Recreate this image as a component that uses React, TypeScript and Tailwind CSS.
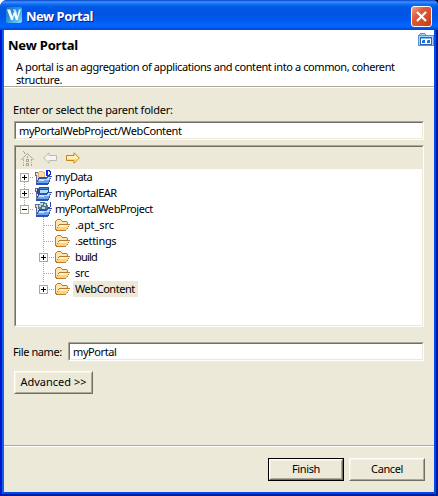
import type { ReactNode } from "react";

const sunken =
  "border border-t-[#aca899] border-l-[#aca899] border-r-white border-b-white";
const sunkenInner =
  "border border-t-[#716f64] border-l-[#716f64] border-r-[#ece9d8] border-b-[#ece9d8]";
const raised =
  "border border-t-white border-l-white border-r-[#716f64] border-b-[#716f64]";
const raisedInner =
  "border border-t-[#f4f1e6] border-l-[#f4f1e6] border-r-[#aca899] border-b-[#aca899]";

function AppLogo() {
  return (
    <svg width="16" height="16" viewBox="0 0 16 16">
      <defs>
        <linearGradient id="logo" x1="0" y1="0" x2="1" y2="1">
          <stop offset="0" stopColor="#1b6fc4" />
          <stop offset="0.5" stopColor="#2c9ae0" />
          <stop offset="1" stopColor="#8fdcf8" />
        </linearGradient>
      </defs>
      <rect width="16" height="16" rx="2" fill="url(#logo)" />
      <path d="M1 2.500h3.200l2.200 7L8 4.500h2l1.500 5L13 2.500h1.800L11.500 13H10L8 8l-1.200 5H5z" fill="#f4fbff" />
      <path d="M6.500 2.500h3.200L11 7z" fill="#bfe6fa" />
    </svg>
  );
}

function PortalIcon() {
  return (
    <svg width="16" height="14" viewBox="0 0 16 14" shapeRendering="crispEdges">
      <path d="M1 2h1V1h5v1h1v1h8v11H0V3h1z" fill="#5a90d8" />
      <path d="M2 2h5v1H2zM1 4h14v9H1z" fill="#a9d3f7" />
      <path d="M2 5h12v8H2z" fill="#2f62b5" />
      <path d="M3 7h10v5H3z" fill="#fff" />
      <path d="M3 6h10v1H3z" fill="#8abcf0" />
      <path d="M4 8h3v3H4zM9 8h3v3H9z" fill="#1c6fe0" />
      <path d="M4 8h1v1H4zM9 8h1v1H9z" fill="#70b4f4" />
    </svg>
  );
}

function HomeIcon() {
  return (
    <svg width="13" height="15" viewBox="0 0 13 15" shapeRendering="crispEdges" fill="#aca899">
      <path d="M2 0h1v1H2zM3 1h1v2H3zM6 2h1v1H6zM5 3h1v1H5zM7 3h1v1H7zM4 4h1v1H4zM8 4h1v1H8zM3 5h1v1H3zM9 5h1v1H9zM2 6h1v1H2zM10 6h1v1h-1zM1 7h1v1H1zM11 7h1v1h-1zM0 8h1v1H0zM12 8h1v1h-1z" />
      <path d="M6 5h1v2H6zM2 8h1v2H2zM2 11h1v1H2zM2 13h1v2H2zM10 8h1v2h-1zM10 11h1v1h-1zM10 13h1v2h-1zM5 8h3v3H5zM5 12h3v3H5z" />
      <path d="M6 9h1v1H6zM6 13h1v1H6z" fill="#ece9d8" />
    </svg>
  );
}

function BackIcon() {
  return (
    <svg width="14" height="12" viewBox="0 0 14 12">
      <path d="M.7 6 6 .8V3.500h7.500v5H6v2.700z" fill="#f5f4ee" stroke="#bdbab0" />
    </svg>
  );
}

function ForwardIcon() {
  return (
    <svg width="14" height="12" viewBox="0 0 14 12">
      <path d="M13.300 6 8 .8V3.500H.5v5H8v2.700z" fill="#fff0b0" stroke="#c88410" />
      <path d="M1 7h11L8.500 10V8H1z" fill="#fbd873" />
    </svg>
  );
}

function FolderIcon() {
  return (
    <svg width="16" height="12" viewBox="0 0 16 12" shapeRendering="crispEdges">
      <path d="M1 1h1V0h4v1h1v1h5v1h1v2h2v1h-1v2h-1v2h-1v1h-1v1H1v-1H0V2h1z" fill="#bd7a2a" />
      <path d="M2 1h4v1h1v1h5v2H4v1H3v2H2v2H1V2h1z" fill="#fce6ad" />
      <path d="M4 6h10v1h-1v2h-1v2H2V9h1V7h1z" fill="#fbd280" />
      <path d="M5 6h9v1H5zM4 7h8v1H4z" fill="#fff0c4" />
    </svg>
  );
}

// Shared blue open folder; each project type puts its own badge above it
function ProjectIcon({ children }: { children: ReactNode }) {
  return (
    <svg width="17" height="15" viewBox="0 0 17 15" shapeRendering="crispEdges">
      <path d="M0 2h4v1h9v5H5v5H1V6H0z" fill="#6c6694" />
      <path d="M1 3h3v1h8v4H4v2H3v2H2V5H1z" fill="#f0dcc0" />
      {children}
      <path d="M4 7h8V6h5v1h-1v2h-1v3h-1v2h-1v1H1v-2h1v-3h1V8h1z" fill="#2c50b8" />
      <path d="M5 9h7V8h1V7h3v1h-1v2h-1v2h-1v1H2v-1h1v-2h1V9z" fill="#6aa4ea" />
      <path d="M5 9h7V8h1V7h3v1h-2v2H9v1H4V9z" fill="#c4e2ff" />
    </svg>
  );
}

function DataIcon() {
  return (
    <ProjectIcon>
      <path d="M3 2h1V1h4v1h2v6H3z" fill="#e0b070" />
      <path d="M4 2h4v1h1v5H4z" fill="#fce0a4" />
      <path d="M10 0h6v7h-6z" fill="#fff" />
      <path
        d="M11 0h4v1h1v4h-1v1h-4zM12.500 1v4H14V4h.5V2H14V1z"
        fill="#0a2cf0"
        fillRule="evenodd"
      />
    </ProjectIcon>
  );
}

function EarIcon() {
  return (
    <ProjectIcon>
      <path d="M4 1h10v7H4zM2 3h2v5H2z" fill="#1d4f9c" />
      <path d="M5 4h8v4H5z" fill="#b5dcf5" />
      <path d="M5 2h8v1H5z" fill="#3c86d4" />
    </ProjectIcon>
  );
}

function WebIcon() {
  return (
    <ProjectIcon>
      <path d="M5 0h5v1h2v2h1v4h-1v1H4V7H3V2h2z" fill="#54788f" />
      <path d="M5 1h3v2H6v2H4V3h1zM9 2h2v2H9zM7 5h3v2H7z" fill="#bcd8e4" />
      <path d="M15 0h1v5h-1zM13 5h2v1h-2z" fill="#2848b0" />
    </ProjectIcon>
  );
}

function Expander({ open }: { open?: boolean }) {
  return (
    <svg width="9" height="9" viewBox="0 0 9 9" shapeRendering="crispEdges">
      <path d="M0 0h9v9H0z" fill="#aca899" />
      <path d="M1 1h7v7H1z" fill="#fff" />
      <path d={open ? "M2 4h5v1H2z" : "M2 4h5v1H2zM4 2h1v5H4z"} fill="#000" />
    </svg>
  );
}

function Dots({ width }: { width: number }) {
  return (
    <svg width={width} height="1" shapeRendering="crispEdges">
      <path d={`M1 .5H${width}`} stroke="#aca899" strokeDasharray="1 1" />
    </svg>
  );
}

function VerticalDots({ height }: { height: number }) {
  return (
    <svg width="1" height={height} shapeRendering="crispEdges">
      <path d={`M.5 0V${height}`} stroke="#aca899" strokeDasharray="1 1" />
    </svg>
  );
}

const projects = [
  { name: "myData", icon: <DataIcon />, tracking: "tracking-[-0.5px]" },
  { name: "myPortalEAR", icon: <EarIcon />, tracking: "tracking-[-0.45px]" },
  { name: "myPortalWebProject", icon: <WebIcon />, open: true, tracking: "tracking-[-0.43px]" },
];

const folders = [
  { name: ".apt_src", tracking: "tracking-[-0.1px]" },
  { name: ".settings", tracking: "tracking-[-0.3px]" },
  { name: "build", expandable: true, tracking: "tracking-[-0.8px]" },
  { name: "src", tracking: "tracking-[-0.3px]" },
  { name: "WebContent", expandable: true, selected: true, tracking: "tracking-[-0.45px]" },
];

function Tree() {
  return (
    <div className="relative h-[156px] bg-white">
      <div className="absolute top-[13px] left-[8px] flex">
        <VerticalDots height={24} />
      </div>
      <div className="absolute top-[46px] left-[27px] flex">
        <VerticalDots height={67} />
      </div>
      {projects.map((p) => (
        <div key={p.name} className="relative flex h-4 items-center pl-1">
          <Expander open={p.open} />
          <Dots width={5} />
          <span className="ml-px">{p.icon}</span>
          <span className={`-mt-px ml-[3px] ${p.tracking}`}>{p.name}</span>
        </div>
      ))}
      {folders.map((f) => (
        <div key={f.name} className="relative flex h-4 items-center pl-[23px]">
          {f.expandable ? (
            <>
              <Expander />
              <Dots width={6} />
            </>
          ) : (
            <span className="pl-1">
              <Dots width={11} />
            </span>
          )}
          <span className="ml-px">
            <FolderIcon />
          </span>
          <span
            className={`ml-[2px] flex h-4 items-center px-[2px] pb-px ${f.tracking} ${f.selected ? "w-[65px] bg-[#ece9d8]" : ""}`}
          >
            {f.name}
          </span>
        </div>
      ))}
    </div>
  );
}

function TextField({ value, className }: { value: string; className: string }) {
  return (
    <div className={`h-[19px] ${sunken} ${className}`}>
      <div className={`flex h-full items-center bg-white pl-[3px] ${sunkenInner}`}>{value}</div>
    </div>
  );
}

export default function App() {
  return (
    <div className="h-[496px] w-[438px] bg-[linear-gradient(90deg,#fff_50%,#000_50%)]">
      <div className="flex h-full flex-col rounded-tl-[7px] rounded-tr-[5px] bg-[#0831d9] font-['Noto_Sans',sans-serif] text-[11px] leading-[13px] tracking-[-0.4px] whitespace-nowrap text-black [&_svg]:block">
        <header className="flex h-[30px] shrink-0 items-center rounded-tl-[7px] rounded-tr-[5px] bg-[linear-gradient(#0842c8_0px,#3a93ff_2px,#1470f4_4px,#0058e6_7px,#0054e3_14px,#005af0_20px,#0066ff_25px,#0060fa_27px,#0043cf_30px)] pr-[6px] pl-[6px]">
          <AppLogo />
          <h1 className="mt-[2px] ml-1 text-[13px] leading-4 font-bold tracking-[-0.5px] text-white [text-shadow:1px_1px_#0a1883]">
            New Portal
          </h1>
          <button className="mt-[2px] ml-auto flex h-[21px] w-[21px] items-center justify-center rounded-[3px] border border-white bg-[linear-gradient(135deg,#f0a088,#e25a38_35%,#c83c14)]">
            <svg width="11" height="11" viewBox="0 0 11 11">
              <path d="m1 1 9 9m0-9-9 9" stroke="#fff" strokeWidth="2.200" />
            </svg>
          </button>
        </header>

        <div className="flex min-h-0 flex-1 border-x-2 border-b-2 border-r-[#001c9c] border-b-[#001c9c] border-l-[#0016d0]">
          <div className="flex flex-1 flex-col border-x-2 border-b-2 border-r-[#0048f0] border-b-[#0048f0] border-l-[#1060e8] bg-[#ece9d8]">
            <section className="relative h-[57px] shrink-0 border-b border-[#aca899] bg-white pt-[7px] pl-1">
              <h2 className="text-[13px] leading-4 font-bold tracking-[-0.2px]">New Portal</h2>
              <p className="mt-[7px] pl-2 tracking-[-0.41px]">
                A portal is an aggregation of applications and content into a common, coherent
                <br />
                structure.
              </p>
              <span className="absolute top-[2px] right-0">
                <PortalIcon />
              </span>
            </section>

            <section className="flex-1 border-t border-white px-[10px] pt-[15px]">
              <p className="-ml-px tracking-[-0.24px]">Enter or select the parent folder:</p>
              <TextField value="myPortalWebProject/WebContent" className="mt-[5px]" />
              <div className={`mt-[5px] h-[182px] ${sunken}`}>
                <div className={`h-full ${sunkenInner}`}>
                  <div className="flex h-[22px] items-center pl-[5px]">
                    <HomeIcon />
                    <span className="ml-[9px]">
                      <BackIcon />
                    </span>
                    <span className="ml-[9px]">
                      <ForwardIcon />
                    </span>
                  </div>
                  <Tree />
                </div>
              </div>
              <div className="mt-[15px] flex items-center">
                <span className="-ml-px w-[55px]">File name:</span>
                <TextField value="myPortal" className="flex-1" />
              </div>
              <button className={`mt-[10px] block h-[23px] w-[79px] ${raised}`}>
                <span
                  className={`flex h-full items-center justify-center pb-[2px] tracking-normal ${raisedInner}`}
                >
                  Advanced &gt;&gt;
                </span>
              </button>
            </section>

            <footer className="flex h-[47px] shrink-0 justify-end gap-[5px] border-t border-[#aca899] pr-[9px] shadow-[inset_0_1px_#fff]">
              <button className="mt-3 h-[23px] w-[76px] border border-black">
                <span className={`block h-full ${raised}`}>
                  <span className={`flex h-full items-center justify-center pb-[2px] ${raisedInner}`}>
                    Finish
                  </span>
                </span>
              </button>
              <button className={`mt-3 h-[23px] w-[76px] ${raised}`}>
                <span className={`flex h-full items-center justify-center pb-[2px] ${raisedInner}`}>
                  Cancel
                </span>
              </button>
            </footer>
          </div>
        </div>
      </div>
    </div>
  );
}
